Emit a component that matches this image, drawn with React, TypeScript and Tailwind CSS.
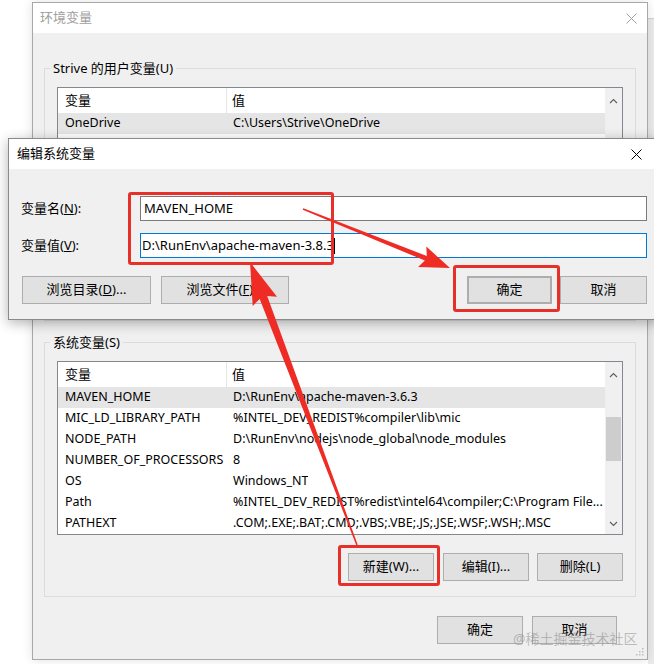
import React from 'react'

const sysVars: [string, string][] = [
  ['MAVEN_HOME', 'D:\\RunEnv\\apache-maven-3.6.3'],
  ['MIC_LD_LIBRARY_PATH', '%INTEL_DEV_REDIST%compiler\\lib\\mic'],
  ['NODE_PATH', 'D:\\RunEnv\\nodejs\\node_global\\node_modules'],
  ['NUMBER_OF_PROCESSORS', '8'],
  ['OS', 'Windows_NT'],
  ['Path', '%INTEL_DEV_REDIST%redist\\intel64\\compiler;C:\\Program File...'],
  ['PATHEXT', '.COM;.EXE;.BAT;.CMD;.VBS;.VBE;.JS;.JSE;.WSF;.WSH;.MSC'],
]

// only the first row of the user list is visible above the edit dialog
const userVars: [string, string][] = [['OneDrive', 'C:\\Users\\Strive\\OneDrive']]

// tapered arrow outline: thin tail, thick neck, triangular head
function arrowPoints(
  x0: number, y0: number, x1: number, y1: number,
  tail: number, neck: number, headLen: number, headHalf: number
) {
  const len = Math.hypot(x1 - x0, y1 - y0)
  const ux = (x1 - x0) / len
  const uy = (y1 - y0) / len
  const px = -uy
  const py = ux
  const bx = x1 - ux * headLen
  const by = y1 - uy * headLen
  const wx = bx - ux * 4
  const wy = by - uy * 4
  const pts = [
    [x0 + (px * tail) / 2, y0 + (py * tail) / 2],
    [bx + (px * neck) / 2, by + (py * neck) / 2],
    [wx + px * headHalf, wy + py * headHalf],
    [x1, y1],
    [wx - px * headHalf, wy - py * headHalf],
    [bx - (px * neck) / 2, by - (py * neck) / 2],
    [x0 - (px * tail) / 2, y0 - (py * tail) / 2],
  ]
  return pts.map((p) => p.map((v) => v.toFixed(1)).join(',')).join(' ')
}

function CloseIcon({ className }: { className: string }) {
  return (
    <svg width="11" height="11" viewBox="0 0 11 11" className={className}>
      <path d="M0.5 0.5 L10.5 10.5 M10.5 0.5 L0.5 10.5" stroke="currentColor" strokeWidth="1" fill="none" />
    </svg>
  )
}

function Btn({ children, className = '' }: { children: React.ReactNode; className?: string }) {
  return (
    <div className={`flex items-center justify-center bg-[#e1e1e1] border border-[#adadad] text-[13px] text-black ${className}`}>
      {children}
    </div>
  )
}

function Chevron({ up }: { up?: boolean }) {
  return (
    <svg width="9" height="6" viewBox="0 0 9 6">
      <path d={up ? 'M1 5 L4.5 1.5 L8 5' : 'M1 1 L4.5 4.5 L8 1'} stroke="#606060" strokeWidth="1.2" fill="none" />
    </svg>
  )
}

function VarList({ rows, selected, thumb }: { rows: [string, string][]; selected: number; thumb?: boolean }) {
  return (
    <div className="flex h-[174px] border border-[#828790] bg-white">
      <div className="flex-1 flex flex-col min-w-0">
        <div className="flex h-[25px] items-center text-[13px]">
          <div className="w-[169px] h-full pl-[7px] flex items-center border-r border-[#e5e5e5]">变量</div>
          <div className="pl-[5px]">值</div>
        </div>
        {rows.map(([name, value], i) => (
          <div
            key={name}
            className={`flex h-[21px] items-center text-[12.5px] whitespace-nowrap ${i === selected ? 'bg-[#e5e5e5]' : ''}`}
          >
            <div className="w-[169px] pl-[7px]">{name}</div>
            <div className="pl-[6px] min-w-0 overflow-hidden">{value}</div>
          </div>
        ))}
      </div>
      <div className="w-[17px] bg-[#f0f0f0] flex flex-col items-center">
        <div className="h-[25px] flex items-center">
          <Chevron up />
        </div>
        {thumb && <div className="mt-[30px] w-[15px] h-[44px] bg-[#cdcdcd]" />}
        <div className="flex-1" />
        <div className="h-[20px] flex items-center">
          <Chevron />
        </div>
      </div>
    </div>
  )
}

export default function App() {
  return (
    <div className="relative w-[654px] h-[664px] overflow-hidden bg-white text-black font-['Noto_Sans','Noto_Sans_CJK_SC',sans-serif]">
      {/* window behind, peeking out on the right */}
      <div className="absolute left-[648px] top-[18px] w-[6px] h-[646px] bg-[#ebebeb] border-t border-[#d0d0d0]" />

      {/* 环境变量 */}
      <div className="absolute left-[32px] top-[2px] w-[616px] h-[658px] flex flex-col border border-[#a8a8a8] bg-[#f0f0f0] shadow-[0_0_10px_rgba(0,0,0,0.12)]">
        <div className="h-[30px] bg-white flex items-center justify-between pl-[7px] pr-[10px] text-[13px] text-[#a0a0a0]">
          <span>环境变量</span>
          <CloseIcon className="text-[#a0a0a0]" />
        </div>
        <div className="flex-1 flex flex-col px-[11px]">
          <fieldset className="mt-[26px] h-[262px] min-w-0 border border-[#dcdcdc] px-[12px] pt-[10px] overflow-hidden">
            <legend className="-ml-[7px] px-[3px] text-[13px] leading-[18px]">Strive 的用户变量(U)</legend>
            <VarList rows={userVars} selected={0} />
          </fieldset>

          <fieldset className="mt-[12px] min-w-0 border border-[#dcdcdc] px-[12px] pt-[10px] pb-[15px]">
            <legend className="-ml-[7px] px-[3px] text-[13px] leading-[18px]">系统变量(S)</legend>
            <VarList rows={sysVars} selected={0} thumb />
            <div className="mt-[18px] flex justify-end gap-[8px]">
              <Btn className="w-[86px] h-[28px] mr-[1px]">新建(W)...</Btn>
              <Btn className="w-[86px] h-[28px]">编辑(I)...</Btn>
              <Btn className="w-[86px] h-[28px]">删除(L)</Btn>
            </div>
          </fieldset>

          <div className="mt-[19px] mr-[19px] flex justify-end gap-[9px]">
            <Btn className="w-[86px] h-[28px]">确定</Btn>
            <Btn className="w-[85px] h-[28px]">取消</Btn>
          </div>
        </div>
        <svg width="8" height="8" viewBox="0 0 8 8" className="absolute right-[3px] bottom-[3px]">
          <rect x="6" y="0" width="1.5" height="1.5" fill="#bcbcbc" />
          <rect x="3" y="3" width="1.5" height="1.5" fill="#bcbcbc" />
          <rect x="6" y="3" width="1.5" height="1.5" fill="#bcbcbc" />
          <rect x="0" y="6" width="1.5" height="1.5" fill="#bcbcbc" />
          <rect x="3" y="6" width="1.5" height="1.5" fill="#bcbcbc" />
          <rect x="6" y="6" width="1.5" height="1.5" fill="#bcbcbc" />
        </svg>
      </div>

      {/* 编辑系统变量 */}
      <div className="absolute left-[8px] top-[138px] w-[652px] h-[182px] flex flex-col border border-[#8a8a8a] bg-[#f0f0f0] shadow-[0_3px_12px_rgba(0,0,0,0.3)]">
        <div className="h-[30px] bg-white flex items-center justify-between pl-[8px] pr-[17px] text-[13px]">
          <span>编辑系统变量</span>
          <CloseIcon className="text-black" />
        </div>
        <div className="flex-1 flex flex-col px-[12px] pt-[27px]">
          <div className="flex items-center">
            <span className="w-[119px] text-[13px]">
              变量名(<span className="underline">N</span>):
            </span>
            <div className="flex-1 h-[25px] bg-white border border-[#7a7a7a] flex items-center pl-[3px] text-[13px]">
              MAVEN_HOME
            </div>
          </div>
          <div className="flex items-center mt-[12px]">
            <span className="w-[119px] text-[13px]">
              变量值(<span className="underline">V</span>):
            </span>
            <div className="flex-1 h-[25px] bg-white border border-[#0078d7] flex items-center pl-[1px] text-[13px]">
              D:\RunEnv\apache-maven-3.8.3
              <span className="w-px h-[16px] bg-black" />
            </div>
          </div>
          <div className="flex mt-[18px] h-[28px]">
            <Btn className="w-[129px] ml-[1px]">
              浏览目录(<span className="underline">D</span>)...
            </Btn>
            <Btn className="w-[128px] ml-[10px]">
              浏览文件(<span className="underline">F</span>)...
            </Btn>
            <div className="flex-1" />
            <Btn className="w-[85px] border-2 border-[#0078d7]">确定</Btn>
            <Btn className="w-[87px] ml-[8px]">取消</Btn>
          </div>
        </div>
      </div>

      {/* annotation boxes */}
      <div className="absolute left-[128px] top-[192px] w-[206px] h-[73px] border-[3px] border-[#e8302a] rounded-[3px]" />
      <div className="absolute left-[453px] top-[265px] w-[107px] h-[47px] border-[3px] border-[#e8302a] rounded-[3px]" />
      <div className="absolute left-[338px] top-[545px] w-[102px] h-[41px] border-[3px] border-[#e8302a] rounded-[3px]" />

      {/* annotation arrows */}
      <svg width="654" height="664" className="absolute left-0 top-0 pointer-events-none">
        <polygon points={arrowPoints(303, 209, 450, 268, 1.5, 5, 26, 11)} fill="#ee2b24" />
        <polygon points={arrowPoints(357, 545, 250, 262, 1.5, 8, 38, 13)} fill="#ee2b24" />
      </svg>

      <div className="absolute left-[513px] top-[628px] text-[14px] text-[rgba(140,140,140,0.55)] whitespace-nowrap">
        @稀土掘金技术社区
      </div>
    </div>
  )
}
